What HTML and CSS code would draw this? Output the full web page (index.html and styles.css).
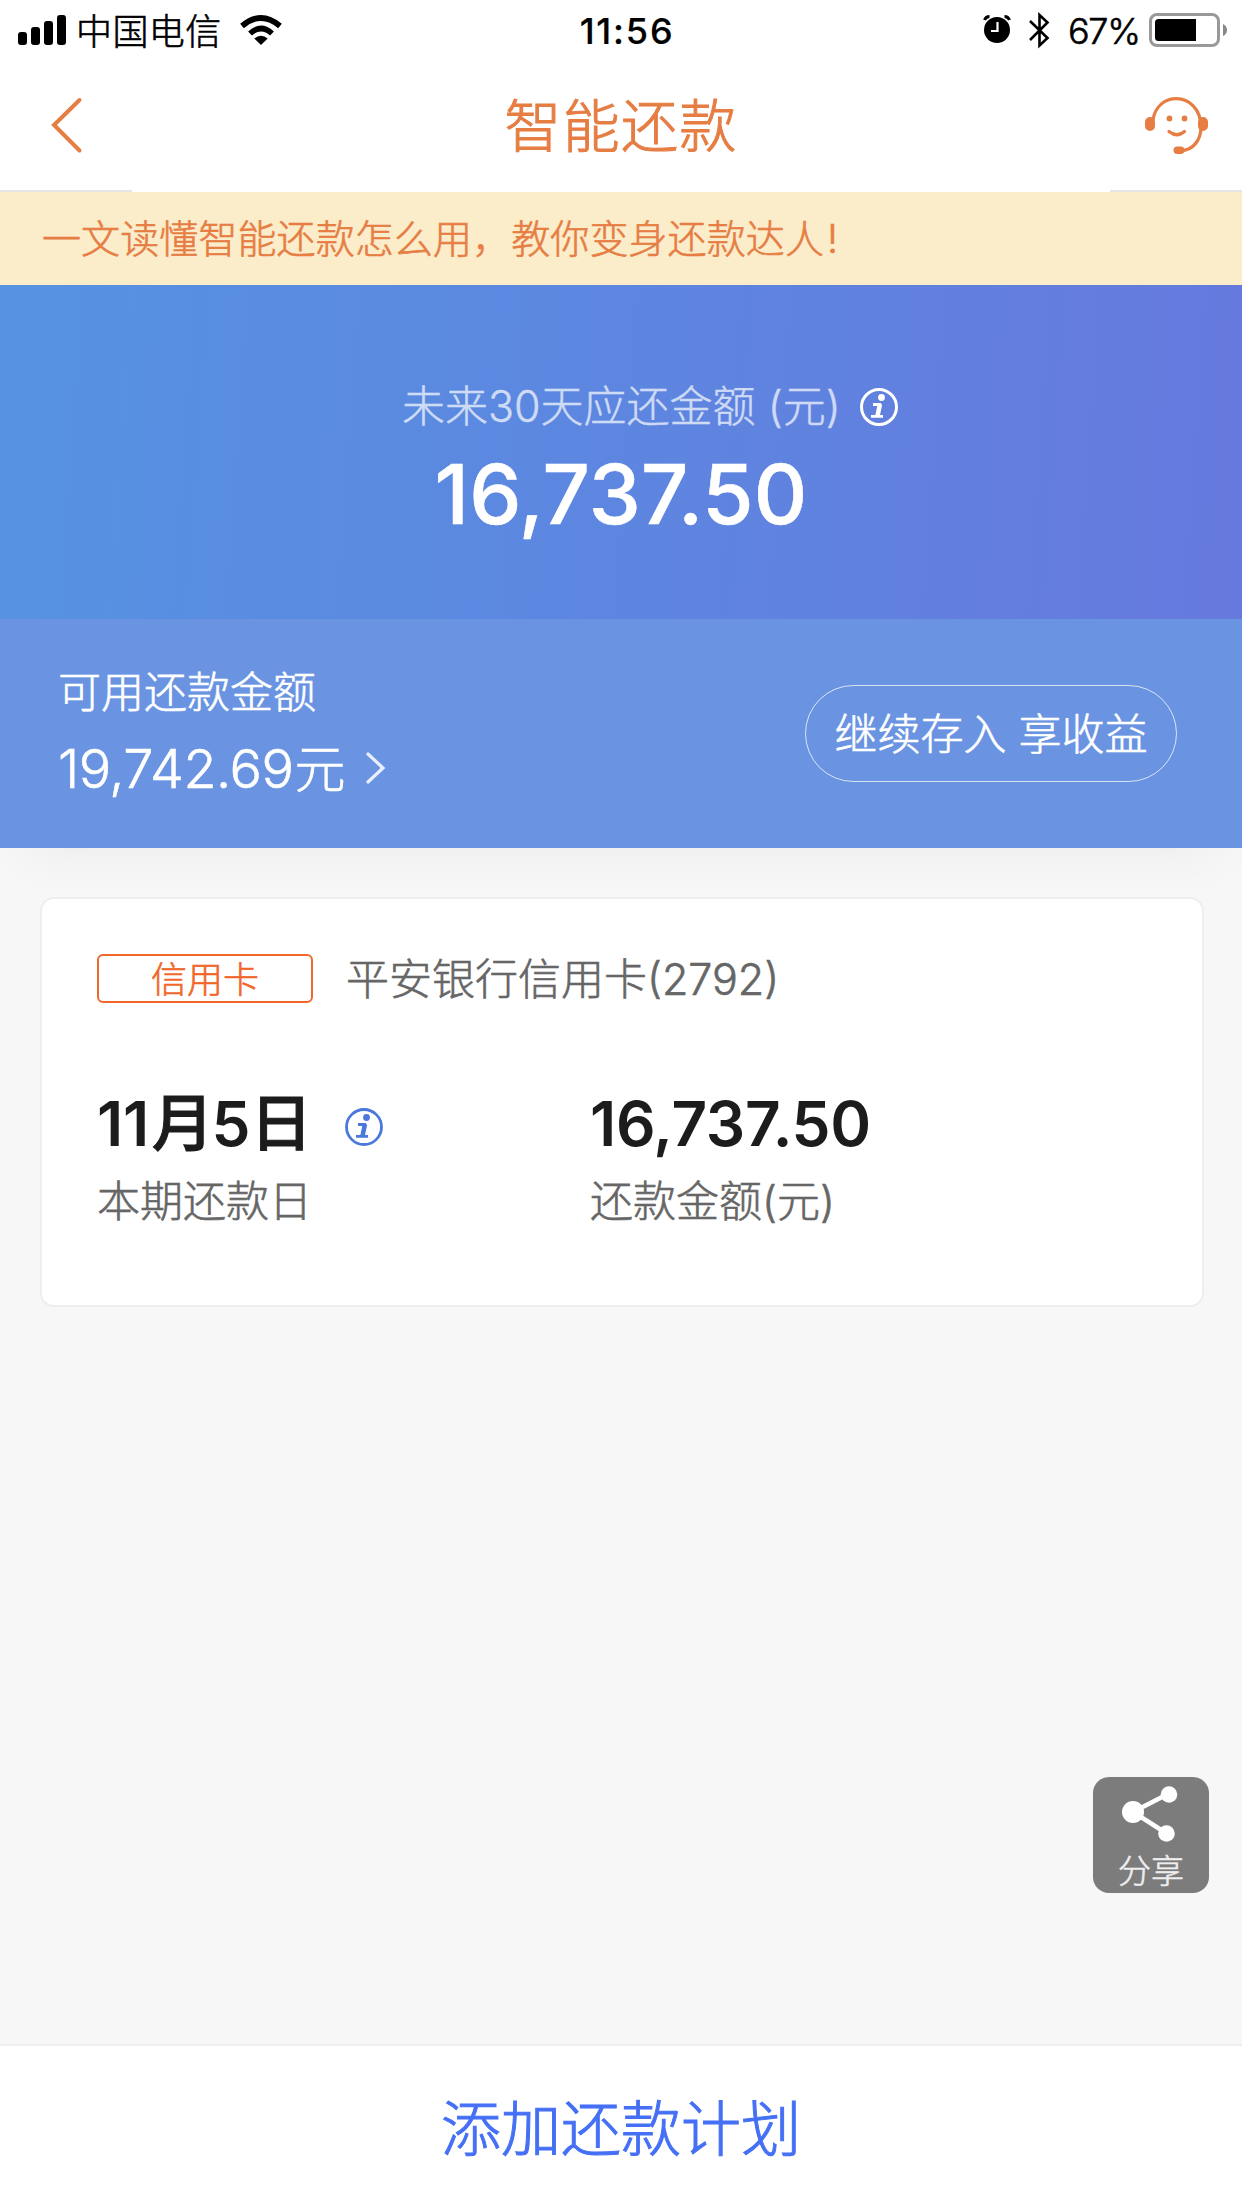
FILE: index.html
```html
<!DOCTYPE html>
<html lang="zh-CN">
<head>
<meta charset="utf-8">
<title>智能还款</title>
<link rel="stylesheet" href="styles.css">
</head>
<body>
<div class="screen">
  <div class="status">
    <div class="status-left">
      <svg class="signal" width="48" height="30" viewBox="0 0 48 30"><rect x="0" y="17" width="9" height="13" rx="3"/><rect x="13" y="12" width="9" height="18" rx="3"/><rect x="26" y="6" width="9" height="24" rx="3"/><rect x="39" y="0" width="9" height="30" rx="3"/></svg>
      <span class="carrier">中国电信</span>
      <svg class="wifi" width="42" height="30" viewBox="0 0 42 30"><path d="M2 11Q21-5 40 11" fill="none" stroke="#000" stroke-width="5.600"/><path d="M10 18.500Q21 8.500 32 18.500" fill="none" stroke="#000" stroke-width="5.600"/><path d="M14.300 23.500Q21 18 27.700 23.500L21 30Z"/></svg>
    </div>
    <time class="clock">11:56</time>
    <div class="status-right">
      <svg class="alarm" width="28" height="29" viewBox="0 0 28 29"><circle cx="14" cy="15" r="13"/><path d="M1.500 5Q3 1.500 6.500 1.500M21.500 1.500Q25 1.500 26.500 5" fill="none" stroke="#000" stroke-width="3"/><path d="M14.500 7V16H8" fill="none" stroke="#fff" stroke-width="2.200"/></svg>
      <svg class="bluetooth" width="21" height="37" viewBox="0 0 21 37"><path d="M1 9L18.500 26 10.500 33.500V3L18.500 10.500 1 28" fill="none" stroke="#000" stroke-width="2.600"/></svg>
      <span class="percent">67%</span>
      <svg class="battery" width="79" height="34" viewBox="0 0 79 34"><rect x="1.500" y="1.500" width="68" height="31" rx="6.500" fill="none" stroke="#999" stroke-width="3"/><path d="M9.500 6H47V28H9.500Q6 28 6 24.500V9.500Q6 6 9.500 6Z"/><path d="M74 11Q78 13 78 17T74 23Z" fill="#888"/></svg>
    </div>
  </div>

  <header class="navbar">
    <svg class="back" width="34" height="60" viewBox="0 0 34 60"><path d="M30.500 5L5 30 30.500 55.500" fill="none" stroke="#e67d43" stroke-width="4" stroke-linecap="round"/></svg>
    <h1>智能还款</h1>
    <svg class="service" width="64" height="60" viewBox="0 0 64 60" fill="none" stroke="#e67d43" stroke-width="3.200"><path d="M8 24C10 10 20 2.700 31.500 2.700C44 2.700 56 13 56 31C56 44 48 54.500 36 54.500"/><rect x="1" y="22" width="8" height="12" rx="4" fill="#e67d43" stroke-width="2"/><rect x="54" y="22" width="8" height="12" rx="4" fill="#e67d43" stroke-width="2"/><rect x="29.500" y="51.500" width="9" height="5.500" rx="2.700" fill="#e67d43" stroke-width="2"/><g fill="#e67d43" stroke="none"><circle cx="24.500" cy="22.500" r="2.900"/><circle cx="39.500" cy="22.500" r="2.900"/></g><path d="M24 35.500Q32 42 39.500 35.500" stroke-linecap="round"/></svg>
  </header>

  <div class="notice">一文读懂智能还款怎么用，教你变身还款达人<span class="mark">!</span></div>

  <section class="hero">
    <div class="hero-label"><span class="hero-text">未来30天应还金额 (元)</span>
      <svg width="40" height="40" viewBox="0 0 40 40"><circle cx="20" cy="20" r="17.500" fill="none" stroke="#fff" stroke-width="3"/><circle cx="22.500" cy="10.500" r="3.400" fill="#fff"/><path d="M14 17.500H22M12 29.300H24" stroke="#fff" stroke-width="2.800"/><path d="M21 17L18.500 29" stroke="#fff" stroke-width="4.500"/></svg>
    </div>
    <div class="hero-amount">16,737.50</div>
  </section>

  <section class="balance">
    <div>
      <div class="balance-label">可用还款金额</div>
      <div class="balance-amount"><span>19,742.69</span><span class="unit">元</span><svg width="22" height="34" viewBox="0 0 22 34"><path d="M3 3L18 17 3 31" fill="none" stroke="#fff" stroke-opacity=".85" stroke-width="3.200" stroke-linecap="round"/></svg></div>
    </div>
    <a class="deposit">继续存入 享收益</a>
  </section>

  <main class="content">
    <article class="card">
      <div class="card-head"><span class="tag">信用卡</span><span class="bank">平安银行信用卡(2792)</span></div>
      <div class="card-grid">
        <div>
          <div class="value"><span class="due">11<span class="han month">月</span>5<span class="han">日</span></span><svg width="40" height="40" viewBox="0 0 40 40"><circle cx="20" cy="20" r="17.500" fill="none" stroke="#4b78db" stroke-width="2.800"/><circle cx="22.500" cy="10.500" r="3.400" fill="#4b78db"/><path d="M14 17.500H22M12 29.300H24" stroke="#4b78db" stroke-width="2.800"/><path d="M21 17L18.500 29" stroke="#4b78db" stroke-width="4.500"/></svg></div>
          <div class="caption">本期还款日</div>
        </div>
        <div>
          <div class="value">16,737.50</div>
          <div class="caption">还款金额(元)</div>
        </div>
      </div>
    </article>
  </main>

  <footer class="footer">添加还款计划</footer>

  <div class="share">
    <svg width="60" height="60" viewBox="0 0 60 60"><path d="M47 9L12 27 45 48" fill="none" stroke="#fff" stroke-width="4.500"/><g fill="#fff"><circle cx="12" cy="27" r="11"/><circle cx="48" cy="9.500" r="8.300"/><circle cx="45.500" cy="48.500" r="8.300"/></g></svg>
    <span>分享</span>
  </div>
</div>
</body>
</html>
```
FILE: styles.css
```css
* { box-sizing: border-box; }
body { margin: 0; }
svg { display: block; flex: none; }
.screen {
  position: relative;
  display: flex;
  flex-direction: column;
  width: 1242px;
  height: 2208px;
  background: #f7f7f7;
  font-family: Inter, "Noto Sans CJK SC", sans-serif;
  font-weight: 300;
  -webkit-text-stroke: .6px currentColor;
  white-space: nowrap;
  overflow: hidden;
}
.status {
  display: grid;
  grid-template-columns: 1fr auto 1fr;
  height: 60px;
  background: #fff;
  color: #000;
  font-size: 36px;
  line-height: 62px;
}
.status-left { display: flex; padding-left: 18px; }
.signal { margin-top: 15px; }
.carrier { margin-left: 10px; width: 164px; letter-spacing: .4px; line-height: 64px; }
.wifi { margin-top: 15px; }
.clock { font-weight: 500; letter-spacing: 1.800px; padding-left: 12px; -webkit-text-stroke-width: .2px; }
.status-right { display: flex; justify-content: flex-end; padding-right: 14px; }
.alarm { margin-top: 15px; }
.bluetooth { margin: 12px 18px 0 18px; }
.percent { width: 81px; letter-spacing: -1.300px; }
.battery { margin-top: 13px; }
.navbar {
  display: grid;
  grid-template-columns: 1fr auto 1fr;
  height: 132px;
  background:
    linear-gradient(#e6e6e8, #e6e6e8) 0 100% / 132px 2px no-repeat,
    linear-gradient(#e6e6e8, #e6e6e8) 100% 100% / 132px 2px no-repeat,
    #fff;
}
.back { margin: 35px 0 0 49px; }
.navbar h1 {
  margin: 0;
  color: #e67d43;
  font-size: 57px;
  font-weight: 300;
  line-height: 134px;
  letter-spacing: 1.300px;
  -webkit-text-stroke-width: 1px;
}
.service { justify-self: end; margin: 36px 33px 0 0; }
.notice {
  height: 93px;
  padding-left: 42px;
  background: #fbecca;
  color: #e67d43;
  font-size: 39px;
  line-height: 94px;
  letter-spacing: .1px;
}
.mark { margin-left: 3px; }
.hero {
  height: 334px;
  background: linear-gradient(94deg, #5692e2, #5d86e0 50%, #667ade 97%);
  color: #fff;
  padding-top: 90px;
}
.hero-label {
  display: flex;
  height: 62px;
  padding-left: 402px;
  font-size: 43px;
  line-height: 62px;
  -webkit-text-stroke-width: .4px;
}
.hero-text { width: 457px; opacity: .7; }
.hero-label svg { margin-top: 12px; }
.hero-amount {
  font-size: 83px;
  font-weight: 550;
  line-height: 114px;
  letter-spacing: .1px;
  text-align: center;
}
.balance {
  position: relative;
  z-index: 1;
  display: flex;
  justify-content: space-between;
  align-items: flex-start;
  height: 229px;
  padding: 42px 65px 0 58px;
  background: #6a94e1;
  box-shadow: 0 30px 50px -25px rgba(0, 0, 0, .05);
  color: #fff;
}
.balance-label { font-size: 43px; line-height: 62px; }
.balance-amount { display: flex; font-size: 54px; line-height: 92px; letter-spacing: -.5px; }
.unit { font-size: 51px; width: 51px; margin-left: 1px; line-height: 94px; }
.balance-amount svg { margin: 28px 0 0 20px; }
.deposit {
  width: 372px;
  height: 97px;
  margin-top: 24px;
  border: 1.500px solid rgba(255, 255, 255, .75);
  border-radius: 49px;
  font-size: 43px;
  line-height: 96px;
  text-align: center;
}
.content { flex: 1; padding: 49px 38px 0 40px; }
.card {
  height: 410px;
  padding: 54px 55px;
  background: #fff;
  border: 2px solid #eee;
  border-radius: 14px;
}
.card-head { display: flex; align-items: center; height: 50px; }
.tag {
  width: 216px;
  height: 49px;
  border: 2px solid #f1672a;
  border-radius: 6px;
  color: #f1672a;
  font-size: 36px;
  line-height: 48px;
  text-align: center;
}
.bank { margin-left: 33px; padding-top: 2px; color: #666; font-size: 43px; line-height: 52px; }
.card-grid { display: grid; grid-template-columns: 493px 1fr; padding-top: 78px; }
.value {
  display: flex;
  height: 85px;
  color: #1c1c1c;
  font-size: 62px;
  font-weight: 600;
  line-height: 86px;
  letter-spacing: -.3px;
  -webkit-text-stroke-width: 0;
}
.due { width: 247px; }
.han { font-weight: 500; -webkit-text-stroke-width: 1px; }
.month { margin: 0 -2px 0 3px; }
.value svg { margin-top: 26px; }
.caption { color: #666; font-size: 43px; line-height: 70px; }
.footer {
  height: 164px;
  border-top: 2px solid #eee;
  background: #fff;
  color: #4570f5;
  font-size: 60px;
  line-height: 166px;
  text-align: center;
  -webkit-text-stroke-width: 1px;
}
.share {
  position: absolute;
  left: 1093px;
  top: 1777px;
  width: 116px;
  height: 116px;
  border-radius: 16px;
  background: #7c7c7c;
  color: #eee;
  font-size: 33px;
  line-height: 44px;
  text-align: center;
}
.share svg { margin: 8px 0 4px 28px; }
.share span { display: block; }
```
